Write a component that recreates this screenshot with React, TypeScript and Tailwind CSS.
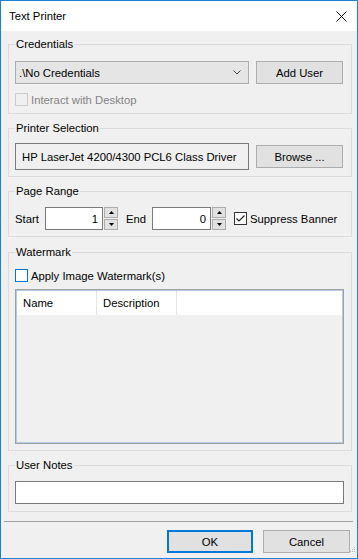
import React from "react";

const FONT = "font-['Liberation_Sans',Arial,sans-serif]";

function Group({
  title,
  className = "",
  children,
}: {
  title: string;
  className?: string;
  children: React.ReactNode;
}) {
  return (
    <fieldset
      className={`ml-[7px] w-[344px] border border-[#dcdcdc] px-[6px] ${className}`}
    >
      <legend className="px-[1px] leading-4">{title}</legend>
      {children}
    </fieldset>
  );
}

function Button({
  label,
  className = "",
  primary = false,
}: {
  label: string;
  className?: string;
  primary?: boolean;
}) {
  return (
    <div
      className={`flex h-[23px] items-center justify-center bg-[#e1e1e1] ${
        primary ? "border-2 border-[#0078d7]" : "border border-[#adadad]"
      } ${className}`}
    >
      {label}
    </div>
  );
}

function CheckBox({
  checked = false,
  disabled = false,
  focused = false,
}: {
  checked?: boolean;
  disabled?: boolean;
  focused?: boolean;
}) {
  const border = disabled
    ? "border-[#cccccc] bg-[#f0f0f0]"
    : focused
      ? "border-[#0078d7] bg-white"
      : "border-[#333333] bg-white";
  return (
    <div className={`flex h-[13px] w-[13px] shrink-0 items-center justify-center border ${border}`}>
      {checked && (
        <svg width="11" height="11" viewBox="0 0 11 11">
          <path d="M1.5 5.5 L4 8 L9.5 2.5" fill="none" stroke="#222" strokeWidth="1.2" />
        </svg>
      )}
    </div>
  );
}

function Spinner() {
  return (
    <div className="flex h-[23px] w-[14px] flex-col justify-between">
      <div className="flex h-[11px] items-center justify-center border border-[#adadad] bg-[#e1e1e1]">
        <svg width="5" height="3" viewBox="0 0 5 3">
          <path d="M0 3 L2.5 0 L5 3 Z" fill="#000" />
        </svg>
      </div>
      <div className="flex h-[11px] items-center justify-center border border-[#adadad] bg-[#e1e1e1]">
        <svg width="5" height="3" viewBox="0 0 5 3">
          <path d="M0 0 L5 0 L2.5 3 Z" fill="#000" />
        </svg>
      </div>
    </div>
  );
}

function NumberBox({ value, width }: { value: string; width: string }) {
  return (
    <div
      className={`flex h-[23px] ${width} items-center justify-end border border-[#7a7a7a] bg-white pr-[4px]`}
    >
      {value}
    </div>
  );
}

export default function App() {
  return (
    <div
      className={`flex h-[559px] w-[358px] flex-col whitespace-nowrap border border-[#1883d7] bg-[#f0f0f0] text-[11.3px] leading-4 text-black ${FONT}`}
    >
      {/* Title bar */}
      <div className="flex h-[30px] shrink-0 items-center justify-between bg-white pl-[8px] pr-[10px]">
        <span>Text Printer</span>
        <svg width="11" height="11" viewBox="0 0 11 11">
          <path d="M0.5 0.5 L10.5 10.5 M10.5 0.5 L0.5 10.5" stroke="#111" strokeWidth="1" />
        </svg>
      </div>

      <Group title="Credentials" className="mt-[5px] pb-[7px]">
        <div className="mt-[9px] flex h-[23px] items-center gap-[7px]">
          <div className="flex h-[23px] w-[234px] items-center justify-between border border-[#acacac] bg-[#e5e5e5] pl-[3px] pr-[7px]">
            <span>.\No Credentials</span>
            <svg width="8" height="5" viewBox="0 0 8 5">
              <path d="M0.5 0.5 L4 4 L7.5 0.5" fill="none" stroke="#444" strokeWidth="1" />
            </svg>
          </div>
          <Button label="Add User" className="w-[87px]" />
        </div>
        <div className="mt-[9px] flex h-[13px] items-center gap-[3px] text-[#838383]">
          <CheckBox disabled />
          <span>Interact with Desktop</span>
        </div>
      </Group>

      <Group title="Printer Selection" className="mt-[6px] pb-[6px]">
        <div className="mt-[7px] flex h-[27px] items-center gap-[7px]">
          <div className="flex h-[27px] w-[234px] items-center overflow-hidden border border-[#7a7a7a] bg-[#f0f0f0] pl-[6px]">
            HP LaserJet 4200/4300 PCL6 Class Driver
          </div>
          <Button label="Browse ..." className="w-[87px]" />
        </div>
      </Group>

      <Group title="Page Range" className="mt-[6px] pb-[6px]">
        <div className="mt-[8px] flex h-[23px] items-center">
          <span className="w-[30px]">Start</span>
          <NumberBox value="1" width="w-[58px]" />
          <div className="ml-[1px]">
            <Spinner />
          </div>
          <span className="ml-[8px] w-[26px]">End</span>
          <NumberBox value="0" width="w-[59px]" />
          <div className="ml-[1px]">
            <Spinner />
          </div>
          <div className="ml-[8px] flex items-center gap-[3px]">
            <CheckBox checked />
            <span>Suppress Banner</span>
          </div>
        </div>
      </Group>

      <Group title="Watermark" className="mt-[7px] pb-[6px]">
        <div className="mt-[9px] flex h-[13px] items-center gap-[3px]">
          <CheckBox focused />
          <span>Apply Image Watermark(s)</span>
        </div>
        <div className="mt-[7px] h-[155px] w-[329px] border border-[#a0a0a0] bg-[#f0f0f0] shadow-[inset_0_0_0_1px_#b4cce8]">
          <div className="ml-px mt-px flex h-[24px] w-[325px] bg-white">
            <div className="flex w-[80px] items-center border-r border-[#e5e5e5] pl-[6px]">Name</div>
            <div className="flex w-[80px] items-center border-r border-[#e5e5e5] pl-[6px]">Description</div>
          </div>
        </div>
      </Group>

      <Group title="User Notes" className="mt-[6px] pb-[7px]">
        <div className="mt-[8px] h-[23px] w-[329px] border border-[#7a7a7a] bg-white" />
      </Group>

      <div className="ml-[3px] mt-[9px] h-px w-[349px] bg-[#a0a0a0]" />

      <div className="relative mt-[8px] flex justify-end gap-[10px] pr-[7px]">
        <Button label="OK" primary className="w-[86px]" />
        <Button label="Cancel" className="w-[87px]" />
        <svg
          className="absolute right-[1px] top-[17px]"
          width="6"
          height="6"
          viewBox="0 0 6 6"
        >
          <rect x="4" y="0" width="1" height="1" fill="#b5b5b5" />
          <rect x="2" y="2" width="1" height="1" fill="#b5b5b5" />
          <rect x="4" y="2" width="1" height="1" fill="#b5b5b5" />
          <rect x="0" y="4" width="1" height="1" fill="#b5b5b5" />
          <rect x="2" y="4" width="1" height="1" fill="#b5b5b5" />
          <rect x="4" y="4" width="1" height="1" fill="#b5b5b5" />
        </svg>
      </div>
    </div>
  );
}
